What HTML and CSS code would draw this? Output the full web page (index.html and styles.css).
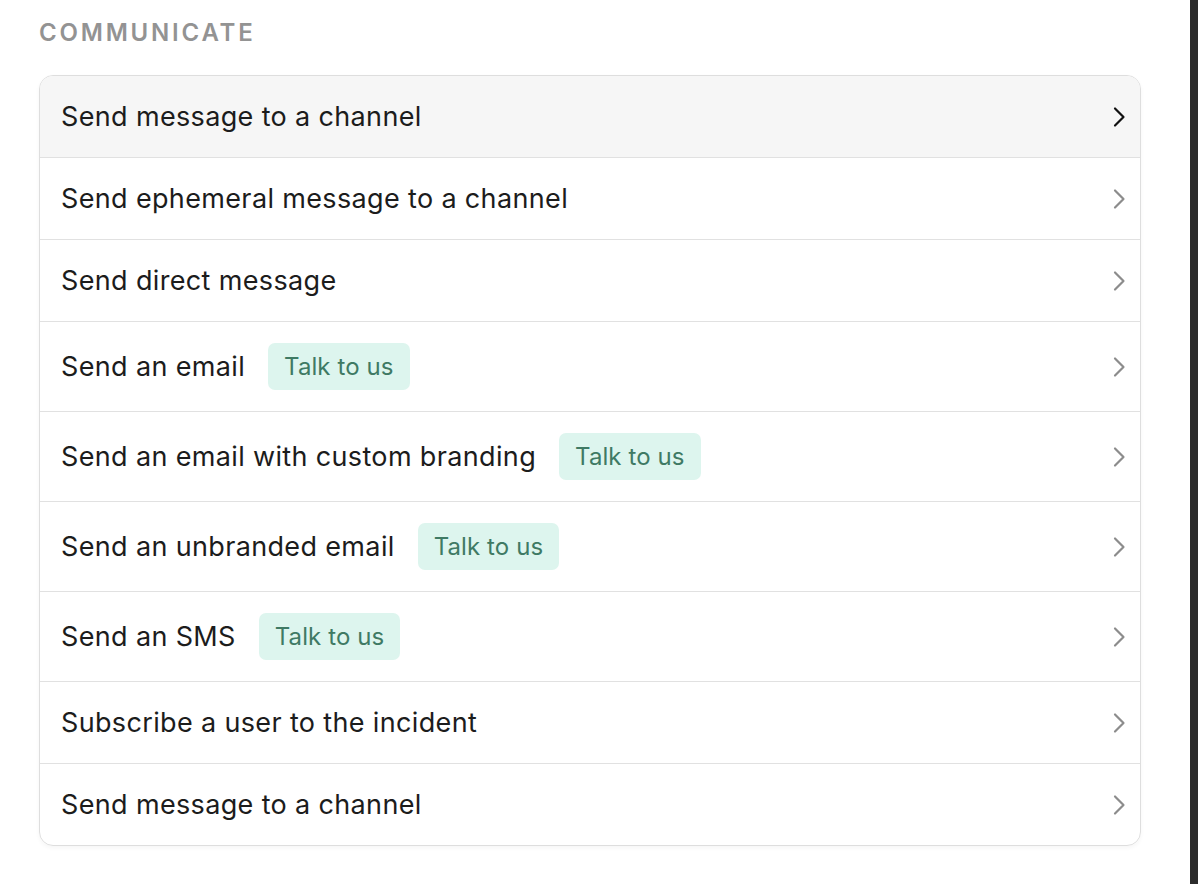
FILE: index.html
```html
<!DOCTYPE html>
<html lang="en">
<head>
    <meta charset="UTF-8">
    <title>Communicate</title>
    <link rel="stylesheet" href="styles.css">
</head>
<body>
    <main class="panel">
        <h2 class="section-title">Communicate</h2>
        <ul class="step-list">
            <li class="step active">
                <span class="step-name">Send message to a channel</span>
                <svg class="chevron" viewBox="0 0 24 24"><path d="M7 3.5 L15.5 12 L7 20.5"/></svg>
            </li>
            <li class="step">
                <span class="step-name">Send ephemeral message to a channel</span>
                <svg class="chevron" viewBox="0 0 24 24"><path d="M7 3.5 L15.5 12 L7 20.5"/></svg>
            </li>
            <li class="step">
                <span class="step-name">Send direct message</span>
                <svg class="chevron" viewBox="0 0 24 24"><path d="M7 3.5 L15.5 12 L7 20.5"/></svg>
            </li>
            <li class="step tall">
                <span class="step-name">Send an email</span>
                <span class="badge">Talk to us</span>
                <svg class="chevron" viewBox="0 0 24 24"><path d="M7 3.5 L15.5 12 L7 20.5"/></svg>
            </li>
            <li class="step tall">
                <span class="step-name">Send an email with custom branding</span>
                <span class="badge">Talk to us</span>
                <svg class="chevron" viewBox="0 0 24 24"><path d="M7 3.5 L15.5 12 L7 20.5"/></svg>
            </li>
            <li class="step tall">
                <span class="step-name">Send an unbranded email</span>
                <span class="badge">Talk to us</span>
                <svg class="chevron" viewBox="0 0 24 24"><path d="M7 3.5 L15.5 12 L7 20.5"/></svg>
            </li>
            <li class="step tall">
                <span class="step-name">Send an SMS</span>
                <span class="badge">Talk to us</span>
                <svg class="chevron" viewBox="0 0 24 24"><path d="M7 3.5 L15.5 12 L7 20.5"/></svg>
            </li>
            <li class="step">
                <span class="step-name">Subscribe a user to the incident</span>
                <svg class="chevron" viewBox="0 0 24 24"><path d="M7 3.5 L15.5 12 L7 20.5"/></svg>
            </li>
            <li class="step">
                <span class="step-name">Send message to a channel</span>
                <svg class="chevron" viewBox="0 0 24 24"><path d="M7 3.5 L15.5 12 L7 20.5"/></svg>
            </li>
        </ul>
    </main>
    <div class="edge"></div>
</body>
</html>
```

FILE: styles.css
```css
html, body {
    height: 100%;
}

body {
    margin: 0;
    display: flex;
    background: #ffffff;
    font-family: Inter, "Noto Sans", sans-serif;
    color: #1c1c1c;
}

.panel {
    flex: 1;
    padding: 20px 49px 0 39px;
}

.section-title {
    margin: 0 0 29px 0;
    font-size: 24px;
    font-weight: 600;
    letter-spacing: 2.8px;
    text-transform: uppercase;
    color: #939393;
    line-height: 26px;
}

.step-list {
    list-style: none;
    margin: 0;
    padding: 0;
    border: 1px solid #dedede;
    border-radius: 14px;
    overflow: hidden;
    box-shadow: 0 2px 4px rgba(0, 0, 0, 0.04);
}

.step {
    display: flex;
    align-items: center;
    height: 81px;
    padding: 0 8px 0 21px;
    border-top: 1px solid #e1e1e1;
    font-size: 27px;
    letter-spacing: 0.35px;
}

.step:first-child {
    border-top: none;
}

.step.tall {
    height: 89px;
}

.step.active {
    background: #f6f6f6;
}

.badge {
    margin-left: 23px;
    padding: 0 16px;
    height: 47px;
    line-height: 47px;
    border-radius: 7px;
    background: #ddf5ee;
    color: #3f7a64;
    font-size: 24px;
    letter-spacing: 0.1px;
}

.chevron {
    margin-left: auto;
    width: 24px;
    height: 24px;
    fill: none;
    stroke: #8c8c8c;
    stroke-width: 2.2;
    stroke-linecap: round;
    stroke-linejoin: round;
}

.step.active .chevron {
    stroke: #111111;
}

.edge {
    width: 8px;
    background: #2b2b2b;
}
```
